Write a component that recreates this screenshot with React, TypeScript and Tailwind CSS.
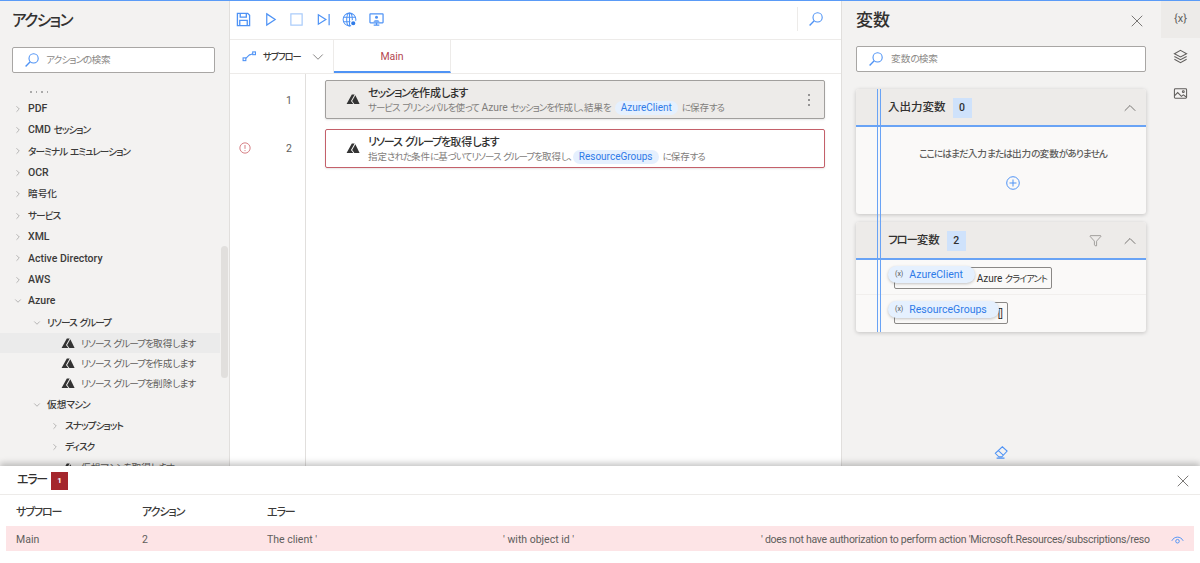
import React from 'react';
import { ChevronDown, ChevronRight, ChevronUp, Filter, X } from 'lucide-react';

const FONT = '[font-family:"Roboto","Noto_Sans_CJK_JP",sans-serif] [font-feature-settings:"palt"]';

// kana runs in the original UI font are much narrower than Noto's, so squeeze them
const T: React.FC<{ children: string }> = ({ children }) => (
  <>
    {children.split(/([\u3001\u3040-\u30ff]+|[\u4e00-\u9fff]+)/).map((part, i) => {
      if (/[\u3001\u3040-\u30ff]/.test(part)) {
        return (
          <span key={i} className="text-[0.92em] tracking-[-0.1em]">
            {part}
          </span>
        );
      }
      if (/[\u4e00-\u9fff]/.test(part)) {
        return (
          <span key={i} className="text-[0.92em]">
            {part}
          </span>
        );
      }
      return part;
    })}
  </>
);

const AzureIcon: React.FC<{ className?: string }> = ({ className }) => (
  <svg viewBox="0 0 16 13" className={className} fill="#333">
    <path d="M6.6 0.5 L10 0.5 L5.6 8.2 L8.4 11.8 L0.4 11.8 Z" />
    <path d="M10.8 1.6 L15.8 11.8 L9.6 11.8 L7 8.4 Z" />
  </svg>
);

const SearchIcon: React.FC = () => (
  <svg viewBox="0 0 14 14" className="h-[14px] w-[14px] shrink-0" fill="none" stroke="#4f93f5" strokeWidth="1.1">
    <circle cx="8.6" cy="5.4" r="4.6" />
    <path d="M5.2 8.8 L0.6 13.4" strokeWidth="1.4" />
  </svg>
);

type TreeRow = { label: string; depth: number; open?: boolean };

const treeRows: TreeRow[] = [
  { label: 'PDF', depth: 0 },
  { label: 'CMD セッション', depth: 0 },
  { label: 'ターミナル エミュレーション', depth: 0 },
  { label: 'OCR', depth: 0 },
  { label: '暗号化', depth: 0 },
  { label: 'サービス', depth: 0 },
  { label: 'XML', depth: 0 },
  { label: 'Active Directory', depth: 0 },
  { label: 'AWS', depth: 0 },
  { label: 'Azure', depth: 0, open: true },
  { label: 'リソース グループ', depth: 1, open: true },
];

const TreeFolder: React.FC<{ row: TreeRow }> = ({ row }) => {
  const pad = row.depth === 0 ? 'pl-[13px]' : row.depth === 1 ? 'pl-[32px]' : 'pl-[50px]';
  return (
    <div className={`flex h-[21.4px] items-center gap-[5px] whitespace-nowrap ${pad} text-[10.5px] font-medium text-[#3b3a39]`}>
      {row.open ? (
        <ChevronDown className="h-[10px] w-[10px] text-[#777]" strokeWidth={1.2} />
      ) : (
        <ChevronRight className="h-[10px] w-[10px] text-[#777]" strokeWidth={1.2} />
      )}
      <span>
        <T>{row.label}</T>
      </span>
    </div>
  );
};

const TreeAction: React.FC<{ label: string; active?: boolean }> = ({ label, active }) => (
  <div className={`flex h-[20.2px] items-center gap-[6px] whitespace-nowrap pl-[61px] text-[10.5px] text-[#605e5c] ${active ? 'bg-[#ebebeb]' : ''}`}>
    <AzureIcon className="h-[11px] w-[14px] shrink-0" />
    <span>
      <T>{label}</T>
    </span>
  </div>
);

const SearchBox: React.FC<{ placeholder: string; left: string; gap: string }> = ({ placeholder, left, gap }) => (
  <div className={`flex h-[26px] items-center rounded-[2px] border border-[#a8a6a4] bg-white ${left} ${gap} text-[10.5px] text-[#8a8886]`}>
    <SearchIcon />
    <span>
      <T>{placeholder}</T>
    </span>
  </div>
);

const Chip: React.FC<{ children: React.ReactNode }> = ({ children }) => (
  <span className="mx-[1px] inline-flex h-[14px] items-center rounded-full bg-[#e5f0fe] px-[6px] text-[10px] text-[#2f7be8]">{children}</span>
);

const ActionCard: React.FC<{
  title: string;
  selected?: boolean;
  error?: boolean;
  children: React.ReactNode;
}> = ({ title, selected, error, children }) => (
  <div
    className={`flex h-[39px] items-center rounded-[2px] border pr-[13px] pl-[20px] shadow-[0_1px_2px_rgba(0,0,0,0.1)] ${
      selected ? 'border-[#a19f9d] bg-[#edebe9]' : ''
    } ${error ? 'border-[#c4606a] bg-white' : ''}`}
  >
    <AzureIcon className="mr-[8px] h-[11px] w-[14px] shrink-0" />
    <div className="min-w-0 flex-1 whitespace-nowrap pt-[1px]">
      <div className="text-[12px] leading-[14px] font-medium text-[#323130]">
        <T>{title}</T>
      </div>
      <div className="flex items-center text-[10.3px] leading-[14px] text-[#7f7d7b]">{children}</div>
    </div>
    {selected && (
      <svg viewBox="0 0 4 14" className="h-[14px] w-[4px]" fill="#777">
        <circle cx="2" cy="2" r="1" />
        <circle cx="2" cy="7" r="1" />
        <circle cx="2" cy="12" r="1" />
      </svg>
    )}
  </div>
);

const VarRow: React.FC<{ name: string; type: string; boxWidth: string; border?: boolean }> = ({ name, type, boxWidth, border }) => (
  <div className={`relative h-[35px] pt-[7px] pl-[38px] ${border ? 'border-b border-[#f1efed]' : ''}`}>
    <div className={`flex h-[22px] items-center justify-end rounded-[2px] border border-[#8a8886] pr-[4px] text-[10px] text-[#323130] ${boxWidth}`}>
      <span>
        <T>{type}</T>
      </span>
    </div>
    <div className="absolute top-[6px] left-[32px] flex h-[17px] items-center gap-[6px] rounded-full bg-[#e5f0fe] pr-[12px] pl-[7px] text-[10.5px] text-[#2f7be8] shadow-[0_1px_3px_rgba(0,0,0,0.22)]">
      <span className="text-[7px] text-[#555]">(x)</span>
      <span>{name}</span>
    </div>
  </div>
);

const SectionHeader: React.FC<{ title: string; count: number; filter?: boolean }> = ({ title, count, filter }) => (
  <div className="flex h-[38px] items-center border-b-2 border-[#69a3f5] bg-[#edebe9] pt-[1px] pr-[6px] pl-[32px] text-[12.5px] font-medium text-[#323130]">
    <span>
      <T>{title}</T>
    </span>
    <span className="ml-[7px] flex h-[20px] w-[19px] items-center justify-center bg-[#cfe2fb] text-[10.5px]">{count}</span>
    <span className="flex-1" />
    {filter && <Filter className="mr-[18px] h-[13px] w-[13px] text-[#605e5c]" strokeWidth={1} />}
    <ChevronUp className="h-[20px] w-[20px] text-[#605e5c]" strokeWidth={1} />
  </div>
);

export default function App() {
  return (
    <div className={`flex h-[563px] w-[1200px] flex-col overflow-hidden border-t border-[#5a9bf7] bg-white ${FONT}`}>
      <div className="flex min-h-0 flex-1">
        {/* actions */}
        <aside className="flex w-[230px] shrink-0 flex-col border-r border-[#e1dfdd] bg-[#f3f2f1]">
          <h1 className="mt-[6px] ml-[12px] text-[17px] leading-[26px] font-medium text-[#323130]">
            <T>アクション</T>
          </h1>
          <div className="mt-[13px] mr-[14px] ml-[12px]">
            <SearchBox placeholder="アクションの検索" left="pl-[12px]" gap="gap-[7px]" />
          </div>
          <div className="relative mt-[16px] min-h-0 flex-1 overflow-hidden">
            <div className="absolute right-[1px] h-[132px] w-[7px] rounded-full bg-[#e1dfdd]" style={{ top: 157 }} />
            <div className="pr-[9px]">
              {/* bottom edge of the row scrolled out of view */}
              <div className="flex h-[9px] gap-[4px] pt-[2px] pl-[30px]">
                <i className="h-[1.5px] w-[1.5px] bg-[#aaa]" />
                <i className="h-[1.5px] w-[1.5px] bg-[#aaa]" />
                <i className="h-[1.5px] w-[1.5px] bg-[#aaa]" />
                <i className="h-[1.5px] w-[1.5px] bg-[#aaa]" />
              </div>
              {treeRows.map((r) => (
                <TreeFolder key={r.label} row={r} />
              ))}
              <TreeAction label="リソース グループを取得します" active />
              <TreeAction label="リソース グループを作成します" />
              <TreeAction label="リソース グループを削除します" />
              <TreeFolder row={{ label: '仮想マシン', depth: 1, open: true }} />
              <TreeFolder row={{ label: 'スナップショット', depth: 2 }} />
              <TreeFolder row={{ label: 'ディスク', depth: 2 }} />
              <TreeAction label="仮想マシンを取得します" />
            </div>
          </div>
        </aside>

        {/* flow designer */}
        <main className="flex w-[611px] shrink-0 flex-col bg-white">
          <div className="flex h-[39px] items-center gap-[11.5px] border-b border-[#edebe9] pb-[2px] pl-[6px]">
            <svg viewBox="0 0 16 16" className="h-[15px] w-[15px]" fill="none" stroke="#4f93f5" strokeWidth="1.4">
              <path d="M1.5 1.5 H12.5 L14.5 3.5 V14.5 H1.5 Z" />
              <path d="M4.5 1.5 V5.5 H11 V1.5 M4 14.5 V9 H12 V14.5" />
            </svg>
            <svg viewBox="0 0 16 16" className="h-[15px] w-[15px]" fill="none" stroke="#4f93f5" strokeWidth="1.3">
              <path d="M4 2 L13 8 L4 14 Z" />
            </svg>
            <svg viewBox="0 0 16 16" className="h-[15px] w-[15px]" fill="none" stroke="#a9cbfa" strokeWidth="1.3">
              <rect x="2" y="2" width="12" height="12" />
            </svg>
            <svg viewBox="0 0 16 16" className="h-[15px] w-[15px]" fill="none" stroke="#4f93f5" strokeWidth="1.3">
              <path d="M2.5 3 L10.5 8 L2.5 13 Z M14 2 V14" />
            </svg>
            <svg viewBox="0 0 16 16" className="h-[15px] w-[15px]" fill="none" stroke="#4f93f5" strokeWidth="1.1">
              <circle cx="8" cy="8" r="6.8" />
              <ellipse cx="8" cy="8" rx="3" ry="6.8" />
              <path d="M1.5 5.5 H14.5 M1.5 10.5 H14.5 M8 1 V15" />
              <circle cx="12" cy="12" r="2.8" fill="#2f7be8" stroke="white" />
            </svg>
            <svg viewBox="0 0 16 16" className="h-[15px] w-[15px]" fill="none" stroke="#4f93f5" strokeWidth="1.3">
              <rect x="1" y="2" width="14" height="9.5" rx="0.5" />
              <path d="M5 14 H11 M8 11.5 V14" />
              <circle cx="8" cy="5.6" r="1.6" fill="#4f93f5" stroke="none" />
              <path d="M4.8 10.5 C5.2 8.4 10.8 8.4 11.2 10.5" fill="#4f93f5" stroke="none" />
            </svg>
            <span className="flex-1" />
            <div className="flex h-[24px] w-[44px] items-center justify-center border-l border-[#edebe9] pr-[8px]">
              <SearchIcon />
            </div>
          </div>
          <div className="flex h-[34px] border-b border-[#edebe9]">
            <div className="flex w-[104px] items-center whitespace-nowrap border-r border-[#edebe9] pl-[12px] text-[10px] font-medium text-[#3b3a39]">
              <svg viewBox="0 0 16 12" className="mr-[6px] h-[11px] w-[15px] shrink-0" fill="none" stroke="#4f93f5" strokeWidth="1.2">
                <rect x="1" y="7.5" width="3" height="3" />
                <rect x="11.5" y="1" width="3" height="3" />
                <path d="M4 8 L7 5 Q8 4 9 4 L11.5 3" />
              </svg>
              <T>サブフロー</T>
              <ChevronDown className="ml-[8px] h-[18px] w-[18px] shrink-0 text-[#605e5c]" strokeWidth={1} />
            </div>
            <div className="flex w-[117px] items-center justify-center border-r border-b-2 border-[#edebe9] border-b-[#4f93f5] pt-[2px] text-[10.5px] text-[#b4474f]">
              Main
            </div>
          </div>
          <div className="flex min-h-0 flex-1">
            <div className="relative w-[76px] shrink-0 border-r border-[#e1dfdd] text-[10.5px] text-[#605e5c]">
              <span className="absolute top-[19px] right-[13px]">1</span>
              <span className="absolute top-[67px] right-[13px]">2</span>
              <svg viewBox="0 0 14 14" className="absolute top-[68px] left-[9px] h-[12px] w-[12px]" fill="none" stroke="#cf6a70" strokeWidth="1">
                <circle cx="7" cy="7" r="6" />
                <path d="M7 3.5 V8 M7 9.5 V10.6" />
              </svg>
            </div>
            <div className="flex min-w-0 flex-1 flex-col gap-[10px] pt-[6px] pr-[16px] pl-[19px]">
              <ActionCard title="セッションを作成します" selected>
                <span>
                  <T>サービス プリンシパルを使って Azure セッションを作成し、結果を</T>
                </span>
                <span className="ml-[3px]"><Chip>AzureClient</Chip></span>
                <span className="ml-[3px]">
                  <T>に保存する</T>
                </span>
              </ActionCard>
              <ActionCard title="リソース グループを取得します" error>
                <span>
                  <T>指定された条件に基づいてリソース グループを取得し、</T>
                </span>
                <Chip>ResourceGroups</Chip>
                <span className="ml-[3px]">
                  <T>に保存する</T>
                </span>
              </ActionCard>
            </div>
          </div>
        </main>

        {/* variables */}
        <section className="relative flex w-[320px] shrink-0 flex-col border-l border-[#e1dfdd] bg-[#f3f2f1] pr-[15px] pl-[14px]">
          <div className="mt-[7px] flex h-[26px] items-center justify-between">
            <h2 className="text-[18.5px] font-medium text-[#323130]">
              <T>変数</T>
            </h2>
            <X className="-mr-[1px] h-[20px] w-[20px] text-[#605e5c]" strokeWidth={1} />
          </div>
          <div className="mt-[12px]">
            <SearchBox placeholder="変数の検索" left="pl-[12px]" gap="gap-[8px]" />
          </div>
          <div className="mt-[17px] h-[125px] overflow-hidden rounded-[3px] bg-[#faf9f8] shadow-[0_1px_4px_rgba(0,0,0,0.2)]">
            <SectionHeader title="入出力変数" count={0} />
            <div className="pl-[24px]">
              <p className="mt-[19px] text-center text-[10.5px] font-medium text-[#605e5c]">
                <T>ここにはまだ入力または出力の変数がありません</T>
              </p>
              <svg viewBox="0 0 14 14" className="mx-auto mt-[14px] h-[14px] w-[14px]" fill="none" stroke="#4f93f5" strokeWidth="1">
                <circle cx="7" cy="7" r="6.3" />
                <path d="M7 3.5 V10.5 M3.5 7 H10.5" />
              </svg>
            </div>
          </div>
          <div className="mt-[8px] h-[110px] overflow-hidden rounded-[3px] bg-[#faf9f8] shadow-[0_1px_4px_rgba(0,0,0,0.2)]">
            <SectionHeader title="フロー変数" count={2} filter />
            <VarRow name="AzureClient" type="Azure クライアント" boxWidth="w-[158px]" border />
            <VarRow name="ResourceGroups" type="[]" boxWidth="w-[114px]" />
          </div>
          <span className="flex-1" />
          <svg viewBox="0 0 16 16" className="mb-[7px] h-[14px] w-[14px] self-center" fill="none" stroke="#4f93f5" strokeWidth="1.2">
            <path d="M9.5 2 L15 7 L9 13.5 H5.5 L1.5 9.5 Z M5 6.5 L10.5 11.5 M3 15 H12" />
          </svg>
          {/* column splitter guide */}
          <div className="pointer-events-none absolute top-[88px] left-[35px] h-[243px] w-[4px] border-x border-[#69a3f5]" />
        </section>

        {/* right rail */}
        <nav className="flex w-[39px] shrink-0 flex-col items-center bg-[#f3f2f1] text-[#605e5c]">
          <div className="flex h-[37px] w-full items-center justify-center bg-[#edebe9] text-[11px]">{'{x}'}</div>
          <svg viewBox="0 0 16 16" className="mt-[11px] h-[15px] w-[15px]" fill="none" stroke="#605e5c" strokeWidth="1.1">
            <path d="M8 1.5 L14.5 5 L8 8.5 L1.5 5 Z" />
            <path d="M1.5 8 L8 11.5 L14.5 8 M1.5 11 L8 14.5 L14.5 11" />
          </svg>
          <svg viewBox="0 0 16 16" className="mt-[22px] h-[15px] w-[15px]" fill="none" stroke="#605e5c" strokeWidth="1.1">
            <rect x="1.5" y="3" width="13" height="10" rx="1" />
            <path d="M1.5 10.5 L5 7 L9 11 L11 9.5 L14.5 12" />
            <circle cx="11" cy="6" r="1" />
          </svg>
        </nav>
      </div>

      {/* error list */}
      <footer className="relative z-10 h-[97px] shrink-0 bg-white shadow-[0_-3px_6px_rgba(0,0,0,0.22)]">
        <div className="flex h-[29px] items-center border-b border-[#edebe9] pt-[1px] pr-[7px] pl-[17px] text-[13px] font-medium text-[#323130]">
          <T>エラー</T>
          <span className="ml-[4px] flex h-[18px] w-[17px] items-center justify-center bg-[#a4262c] text-[8px] font-bold text-white">1</span>
          <span className="flex-1" />
          <X className="h-[20px] w-[20px] text-[#605e5c]" strokeWidth={1} />
        </div>
        <div className="flex h-[31px] items-center pt-[3px] pl-[16px] text-[12px] font-medium text-[#3b3a39]">
          <span className="w-[126px]">
            <T>サブフロー</T>
          </span>
          <span className="w-[125px]">
            <T>アクション</T>
          </span>
          <span>
            <T>エラー</T>
          </span>
        </div>
        <div className="mx-[6px] flex h-[25px] items-center whitespace-nowrap bg-[#fde4e6] pt-[2px] pl-[10px] text-[10.5px] text-[#605e5c]">
          <span className="w-[126px]">Main</span>
          <span className="w-[125px]">2</span>
          <span className="w-[236px]">The client '</span>
          <span className="w-[258px]">' with object id '</span>
          <span className="w-[388px] tracking-[-0.26px]">' does not have authorization to perform action 'Microsoft.Resources/subscriptions/reso</span>
          <svg viewBox="0 0 16 12" className="ml-[22px] h-[10px] w-[13px]" fill="none" stroke="#4f93f5" strokeWidth="1.2">
            <path d="M1 7 C4 1 12 1 15 7" />
            <circle cx="8" cy="7.5" r="2.2" />
          </svg>
        </div>
      </footer>
    </div>
  );
}
